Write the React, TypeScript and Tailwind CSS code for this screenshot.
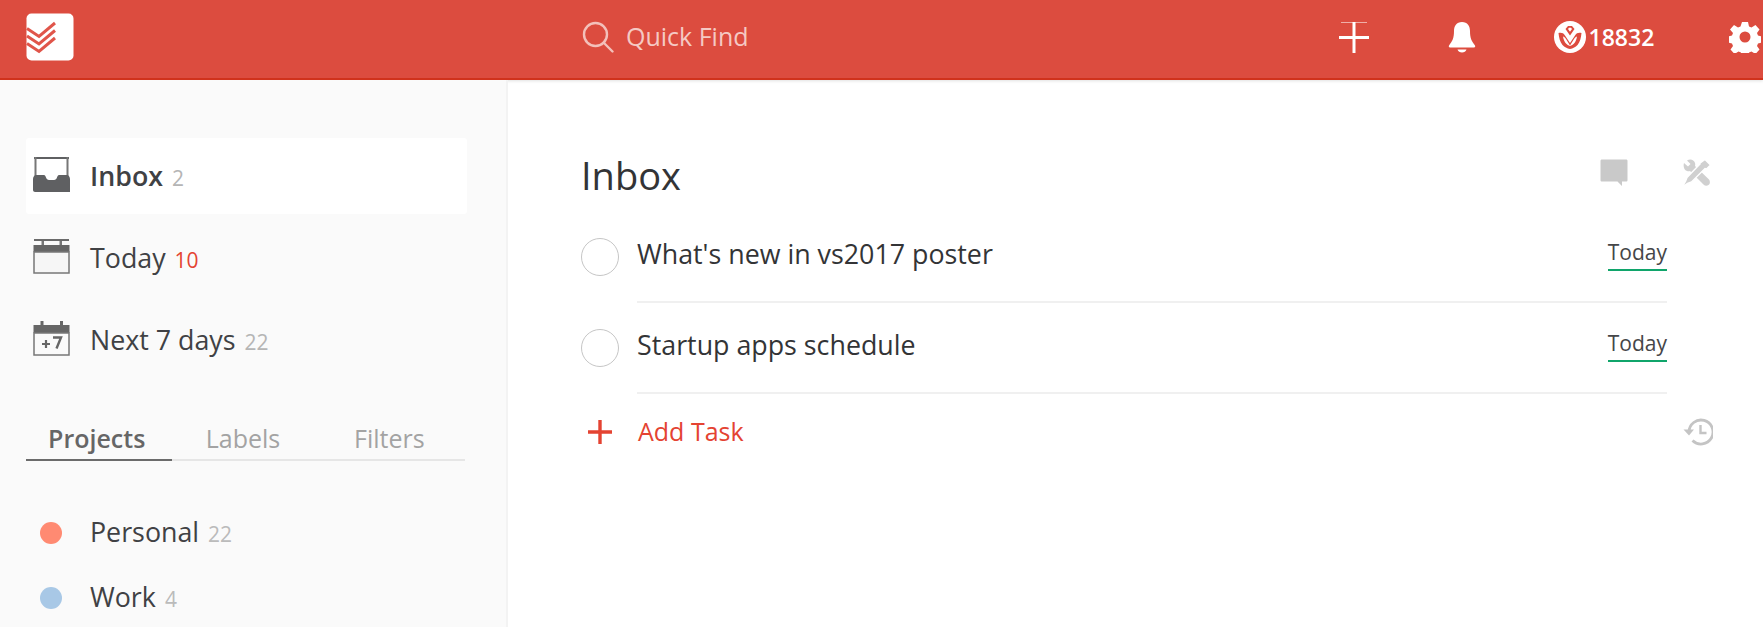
import type { ReactNode } from 'react';

const font = { fontFamily: '"Open Sans", sans-serif' };

function LogoIcon() {
  return (
    <svg viewBox="0 0 48 48" className="h-12 w-12">
      <rect x="0.5" y="0.5" width="47" height="47" rx="5" fill="#fff" />
      <g fill="none" stroke="#e0554a" strokeWidth="3">
        <path d="M1 15.500l12 8L29 10" />
        <path d="M1 23l12 8 16-13.500" />
        <path d="M1 30.500l12 8L29 25" />
      </g>
    </svg>
  );
}

function InboxIcon() {
  return (
    <svg viewBox="0 0 37 35" className="h-[35px] w-[37px]" fill="#5f6062">
      <rect x="1" y="0" width="35" height="2" />
      <rect x="1.500" y="0" width="2" height="22" fill="#777" />
      <rect x="33.500" y="0" width="2" height="22" fill="#777" />
      <path d="M0 22c0-2 1.500-4 3-4h8c1 0 1.500 1 2 2.500.5 1.500 1.500 2.500 3 2.500h5c1.500 0 2.500-1 3-2.500s1-2.500 2-2.500h8c1.500 0 3 2 3 4v13H2c-1 0-2-1-2-2z" />
    </svg>
  );
}

function TodayIcon() {
  return (
    <svg viewBox="0 0 37 35" className="h-[35px] w-[37px]">
      <rect x="1" y="0" width="35" height="2" fill="#6a6a6a" />
      <rect x="8.500" y="2" width="2.500" height="5" fill="#777" />
      <rect x="26.500" y="2" width="2.500" height="5" fill="#777" />
      <rect x="0.500" y="6" width="36" height="7" fill="#666" />
      <rect x="1" y="13" width="35" height="21" fill="#f6f6f6" stroke="#777" strokeWidth="1.500" />
    </svg>
  );
}

function NextWeekIcon() {
  return (
    <svg viewBox="0 0 37 35" className="h-[35px] w-[37px]">
      <rect x="7.500" y="0" width="3" height="6" fill="#666" />
      <rect x="27" y="0" width="3" height="6" fill="#666" />
      <rect x="0.500" y="4" width="36" height="8" fill="#666" />
      <rect x="1" y="12" width="35" height="22" fill="#fafafa" stroke="#777" strokeWidth="1.500" />
      <path d="M9 23h8M13 19v8" stroke="#666" strokeWidth="2.200" />
      <path d="M20 16.500h8l-4.500 11" stroke="#666" strokeWidth="2.400" fill="none" />
    </svg>
  );
}

function SearchIcon() {
  return (
    <svg viewBox="0 0 32 32" className="h-8 w-8" fill="none" stroke="#f3c0ba" strokeWidth="2.400">
      <circle cx="13.500" cy="13.500" r="11.500" />
      <path d="M21.500 21.500l9 9" strokeLinecap="round" />
    </svg>
  );
}

function PlusIcon() {
  return (
    <svg viewBox="0 0 32 32" className="h-8 w-8" fill="none" stroke="#fff">
      <path d="M3 1.500h26" strokeWidth="1" opacity="0.55" />
      <path d="M1 16.500h30" strokeWidth="3" />
      <path d="M16 1v31" strokeWidth="3" />
    </svg>
  );
}

function BellIcon() {
  return (
    <svg viewBox="0 0 28 32" className="h-8 w-7" fill="#fff">
      <path d="M14 1c5.500 0 8 4 8 9 0 7 1.500 10 5 14.500.5 1 0 2-1 2H2c-1 0-1.500-1-1-2C4.500 20 6 17 6 10c0-5 2.500-9 8-9z" />
      <path d="M9.500 28.500h9c-.5 2-2.500 3-4.500 3s-4-1-4.500-3z" />
    </svg>
  );
}

function KarmaIcon() {
  return (
    <svg viewBox="0 0 32 32" className="h-8 w-8">
      <circle cx="16" cy="16" r="16" fill="#fff" />
      <path d="M11.500 8l2.500-3h4l2.500 3-4.500 6.500z" fill="#dd4b3e" />
      <path d="M14 8l1-1.300h2L18 8l-2 2.800z" fill="#fff" />
      <path d="M4.500 12c3-.5 5 0 6.500 2.500l5 7.500 5-7.500c1.500-2.500 3.500-3 6.500-2.500-.5 5-1.500 9-4 12-2 2-4.500 3.500-7.500 4-3-.5-5.500-2-7.500-4-2.500-3-3.500-7-4-12z" fill="#dd4b3e" />
      <path d="M9 15.500c1 0 2 1 3 2.500l4 6.500 4-6.500c1-1.500 2-2.500 3-2.500-.5 3-1.500 5.500-3 7-1 1-2.500 2-4 2.500-1.500-.5-3-1.500-4-2.500-1.500-1.500-2.500-4-3-7z" fill="#fff" />
    </svg>
  );
}

function GearIcon() {
  return (
    <svg viewBox="0 0 32 32" className="h-8 w-8" fill="#fff" fillRule="evenodd">
      <path d="M13 1h6l1 4.500 2.500 1 4-2.500 4 4.500-2.500 3.500 1 2.500 4 1v6l-4 1-1 2.500 2.500 3.500-4 4.500-4-2.500-2.500 1-1 4.500h-6l-1-4.500-2.500-1-4 2.500-4-4.500 2.500-3.500-1-2.500-4-1v-6l4-1 1-2.500L1 8.500 5 4l4 2.500 2.500-1zM16 10.500a5.500 5.500 0 1 0 0 11 5.500 5.500 0 0 0 0-11z" />
    </svg>
  );
}

function CommentIcon() {
  return (
    <svg viewBox="0 0 28 28" className="h-7 w-7" fill="#c9c9c9">
      <path d="M2 0.500h24c1 0 1.500.5 1.500 1.500v19c0 1-.5 1.500-1.500 1.500h-4v4.500l-4.500-4.500H2c-1 0-1.500-.5-1.500-1.500V2c0-1 .5-1.500 1.500-1.500z" />
    </svg>
  );
}

function ToolsIcon() {
  return (
    <svg viewBox="0 0 28 28" className="h-7 w-7" fill="#d0d0d0">
      {/* wrench, top left to bottom right */}
      <path d="M1 4l4 3.500 2.500-2.500L4 1.500C7-.5 11 .5 12 4c.3 1 .3 2 0 3l14 13.500c1.500 2 1 4.500-.5 5.500s-3.500 1-5-.5L7 12c-1 .3-2 .3-3 0C1 11 0 7 1 4z" />
      {/* screwdriver, top right to bottom left */}
      <path d="M22 .5l5.500 5.500-4 4-1.500-.5-13.500 13.500-4 1.500-3 2-1-1 2-3 1.500-4L17 5l-.5-.5z" stroke="#fff" strokeWidth="1.400" />
    </svg>
  );
}

function HistoryIcon() {
  return (
    <svg viewBox="0 0 30 28" className="h-7 w-[30px]" fill="none" stroke="#c4c4c4" strokeWidth="2.800">
      <path d="M6 14a12 12 0 1 1 3.500 8.500" />
      <path d="M17.500 7v8h6" strokeWidth="2.400" />
      <path d="M0.500 11.500h10.500L6 17.500z" fill="#c4c4c4" stroke="none" />
    </svg>
  );
}

function NavRow({ icon, label, count, active, countClass }: {
  icon: ReactNode;
  label: string;
  count: string;
  active?: boolean;
  countClass?: string;
}) {
  return (
    <div className={`flex h-[76px] w-[441px] items-center rounded-[3px] pl-[7px] ${active ? 'bg-white' : ''}`}>
      <div className="mb-[3px] w-[57px] shrink-0">{icon}</div>
      <span className={`text-[26.8px] text-[#404144] ${active ? 'font-semibold' : ''}`}>{label}</span>
      <span className={`mt-[5px] ml-[9px] text-[21px] ${countClass ?? 'text-[#b5b5b5]'}`}>{count}</span>
    </div>
  );
}

function ProjectRow({ color, label, count }: { color: string; label: string; count: string }) {
  return (
    <div className="flex h-[65px] items-center pl-[14px]">
      <span className={`h-[22px] w-[22px] rounded-full ${color}`} />
      <span className="ml-[28px] text-[26.8px] text-[#404144]">{label}</span>
      <span className="mt-[5px] ml-[9px] text-[21px] text-[#bbbbbb]">{count}</span>
    </div>
  );
}

function TaskRow({ text }: { text: string }) {
  return (
    <div className="flex h-[91px] items-center">
      <span className="mt-[-2px] h-[38px] w-[38px] shrink-0 rounded-full border-[1.5px] border-[#c6c6c6]" />
      <div className="ml-[18px] flex h-full flex-1 items-center justify-between border-b-2 border-[#f0f0f0]">
        <span className="mt-[-4px] text-[26.8px] text-[#333436]">{text}</span>
        <span className="mt-[-6px] border-b-2 border-[#10a56b] pb-[1px] text-[21px] leading-[32px] text-[#454648]">Today</span>
      </div>
    </div>
  );
}

export default function App() {
  return (
    <div className="flex h-[627px] w-[1763px] flex-col overflow-hidden bg-white" style={font}>
      <header className="flex h-[80px] shrink-0 items-center border-b-2 border-[#d0321c] bg-[#dc4c3f] pb-[4px] shadow-[0_1px_3px_rgba(0,0,0,0.12)]">
        <div className="ml-[26px] w-[556px]"><LogoIcon /></div>
        <SearchIcon />
        <span className="ml-[12px] text-[25px] text-[#f5c9c4]">Quick Find</span>
        <div className="ml-[589px]"><PlusIcon /></div>
        <div className="ml-[78px]"><BellIcon /></div>
        <div className="ml-[78px] flex items-center">
          <KarmaIcon />
          <span className="ml-[3px] text-[23px] font-semibold text-white">18832</span>
        </div>
        <div className="ml-[75px]"><GearIcon /></div>
      </header>
      <div className="flex min-h-0 flex-1">
        <aside className="w-[508px] shrink-0 border-r-2 border-[#f3f3f3] bg-[#fafafa] pt-[58px] pl-[26px]">
          <NavRow active icon={<InboxIcon />} label="Inbox" count="2" />
          <div className="mt-[6px]">
            <NavRow icon={<TodayIcon />} label="Today" count="10" countClass="text-[#e44332]" />
          </div>
          <div className="mt-[6px]">
            <NavRow icon={<NextWeekIcon />} label="Next 7 days" count="22" />
          </div>
          <div className="mt-[43px] grid w-[439px] grid-cols-3 border-b-2 border-[#e6e6e6] text-center text-[25px] leading-[34px]">
            <span className="mb-[-2px] border-b-2 border-[#6b6b6b] pr-[5px] pb-[4px] font-semibold text-[#666666]">Projects</span>
            <span className="pr-[5px] text-[#a3a3a3]">Labels</span>
            <span className="pr-[5px] text-[#a3a3a3]">Filters</span>
          </div>
          <div className="mt-[39px]">
            <ProjectRow color="bg-[#ff8a72]" label="Personal" count="22" />
            <ProjectRow color="bg-[#a8c8e6]" label="Work" count="4" />
          </div>
        </aside>
        <main className="flex-1 pt-[59px] pl-[73px]">
          <div className="mb-[1px] flex h-[72px] items-center">
            <h1 className="text-[38px] text-[#333436]">Inbox</h1>
            <div className="mb-[4px] ml-auto flex items-center gap-[55px] pr-[52px]">
              <CommentIcon />
              <ToolsIcon />
            </div>
          </div>
          <div className="w-[1086px]">
            <TaskRow text="What's new in vs2017 poster" />
            <TaskRow text="Startup apps schedule" />
          </div>
          <div className="flex h-[76px] items-center">
            <span className="ml-[7px] w-[50px] text-[#e44332]">
              <svg viewBox="0 0 24 24" className="h-6 w-6" fill="none" stroke="#e44332" strokeWidth="3.400">
                <path d="M0 12h24M12 0v24" />
              </svg>
            </span>
            <span className="text-[25px] text-[#e44332]">Add Task</span>
            <div className="ml-auto pr-[50px]"><HistoryIcon /></div>
          </div>
        </main>
      </div>
    </div>
  );
}
